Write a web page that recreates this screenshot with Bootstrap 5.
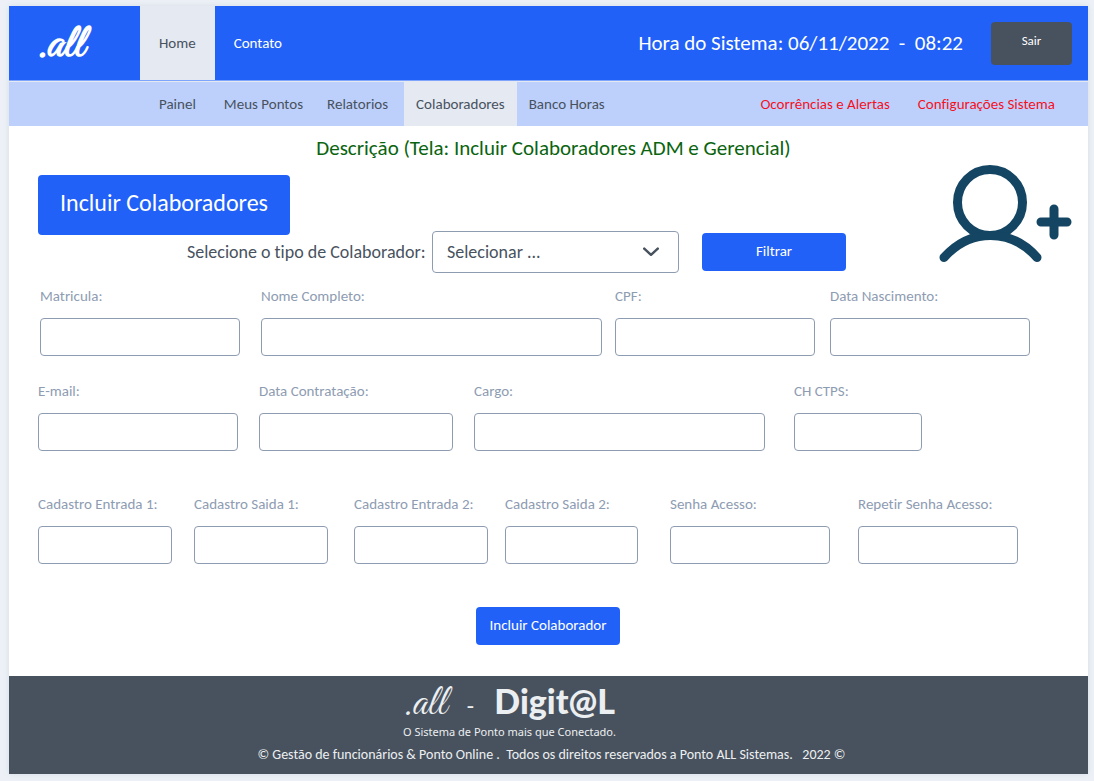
<!DOCTYPE html>
<html lang="pt-BR">
<head>
<meta charset="utf-8">
<meta name="viewport" content="width=device-width, initial-scale=1">
<title>Ponto ALL - Incluir Colaboradores</title>
<link rel="stylesheet" href="https://cdn.jsdelivr.net/npm/bootstrap@5.3.0/dist/css/bootstrap.min.css">
<style>
  :root { --azul: #2161f8; --chumbo: #48525e; --claro: #e4e9f2; --borda: #8e9cb2; }
  body { background: #edf1f7; font-family: Carlito, Lato, sans-serif; font-variant-ligatures: none; font-size: 15px; line-height: 20px; color: var(--chumbo); padding: 6px 6px 8px 9px; }
  .folha { background: #fff; box-shadow: 0 0 6px rgba(60, 80, 120, .12); }
  .topo { background: var(--azul); min-height: 75px; border-bottom: 1px solid #7ea4fb; }
  .topo a, .sub a { text-decoration: none; }
  .marca { display: flex; align-items: center; width: 131px; padding: 4px 0 0 28px; color: #fff; font: bold 48px/60px "Brush Script MT", "Great Vibes", "Dancing Script", cursive; }
  .aba-topo { display: flex; align-items: center; padding: 0 19px; color: #fff; }
  .ativa { background: var(--claro); color: var(--chumbo); }
  .relogio { font-size: 21px; line-height: 28px; color: #fff; white-space: pre; }
  .btn { --bs-btn-font-size: 15px; --bs-btn-line-height: 20px; --bs-btn-border-radius: 4px; border: 0; }
  .btn-azul, .btn-azul:hover { background: var(--azul); color: #fff; }
  .btn-sair, .btn-sair:hover { background: var(--chumbo); color: #fff; width: 81px; height: 43px; font-size: 13px; padding: 0 0 4px; }
  .sub { background: #bdd0fc; min-height: 45px; border-top: 1px solid var(--claro); padding-left: 138px; padding-right: 33px; }
  .sub a { display: flex; align-items: center; color: var(--chumbo); padding: 0 12px; }
  .sub .alerta { color: #f5101e; padding: 0; }
  .titulo { color: #0a640f; font-size: 21px; line-height: 28px; padding: 8px 0 13px; margin: 0 0 0 11px; }
  .miolo { padding: 0 30px 31px 29px; }
  .acoes { margin-right: -14px; }
  .btn-grande { width: 252px; height: 60px; font-size: 24px; line-height: 28px; padding: 0 0 4px; }
  .filtro { padding-left: 149px; margin-top: -4px; }
  .filtro label { font-size: 18px; line-height: 24px; width: 233px; white-space: nowrap; }
  .filtro .form-select { width: 247px; height: 42px; margin: 0 23px 0 12px; font-size: 18px; line-height: 24px; padding: 0 40px 0 14px; border: 1px solid var(--borda); border-radius: 4px; color: var(--chumbo);
    background-image: url("data:image/svg+xml,%3Csvg xmlns='http://www.w3.org/2000/svg' viewBox='0 0 16 16'%3E%3Cpath d='M2 5l6 5.5L14 5' fill='none' stroke='%2348525e' stroke-width='2.2' stroke-linecap='round' stroke-linejoin='round'/%3E%3C/svg%3E");
    background-size: 18px 18px; background-position: right 18px center; }
  .btn-medio { width: 144px; height: 38px; padding: 0 0 2px; }
  .icone { margin-top: -10px; }
  .linha { display: grid; }
  .linha > div:nth-child(1) { grid-column: 1; }
  .linha > div:nth-child(2) { grid-column: 3; }
  .linha > div:nth-child(3) { grid-column: 5; }
  .linha > div:nth-child(4) { grid-column: 7; }
  .linha > div:nth-child(5) { grid-column: 9; }
  .linha > div:nth-child(6) { grid-column: 11; }
  .linha-a { grid-template-columns: 200fr 21fr 341fr 13fr 200fr 15fr 200fr 28fr; margin: 13px 0 25px; padding-left: 2px; }
  .linha-b { grid-template-columns: 200fr 21fr 194fr 21fr 291fr 29fr 128fr 136fr; margin-bottom: 43px; }
  .linha-c { grid-template-columns: 134fr 22fr 134fr 26fr 134fr 17fr 133fr 32fr 160fr 28fr 160fr 40fr; margin-bottom: 43px; }
  .linha label { display: block; color: var(--borda); margin-bottom: 12px; white-space: nowrap; }
  .linha > div { min-width: 0; }
  .linha .form-control { height: 38px; border: 1px solid var(--borda); border-radius: 4px; }
  .rodape { background: var(--chumbo); color: #eceff1; padding: 5px 0 0; min-height: 98px; }
  .assinatura { width: 212px; margin-right: 79px; }
  .assinatura .letra { font: 44px/40px "Brush Script MT", "Great Vibes", "Dancing Script", cursive; }
  .assinatura .nome { font: 900 34px/40px Lato, sans-serif; }
  .assinatura .lema { font: 11px/14px "Noto Sans", sans-serif; white-space: nowrap; }
  .direitos { font-size: 14px; white-space: pre-wrap; margin: 6px 0 0 6px; }
</style>
</head>
<body>
<div class="folha">
  <header class="topo d-flex align-items-stretch">
    <a class="marca" href="#">.all</a>
    <nav class="d-flex" aria-label="Principal">
      <a class="aba-topo ativa" href="#">Home</a>
      <a class="aba-topo" href="#">Contato</a>
    </nav>
    <div class="d-flex align-items-center ms-auto me-3">
      <div class="relogio me-4">Hora do Sistema: 06/11/2022  -  08:22</div>
      <button type="button" class="btn btn-sair ms-1">Sair</button>
    </div>
  </header>
  <nav class="sub d-flex" aria-label="Painel">
    <a href="#">Painel</a>
    <a href="#" class="ms-1">Meus Pontos</a>
    <a href="#" class="me-1">Relatorios</a>
    <a href="#" class="ativa">Colaboradores</a>
    <a href="#">Banco Horas</a>
    <a href="#" class="alerta ms-auto me-4">Ocorrências e Alertas</a>
    <a href="#" class="alerta ms-1">Configurações Sistema</a>
  </nav>
  <main class="miolo">
    <h1 class="titulo text-center fw-normal">Descrição (Tela: Incluir Colaboradores ADM e Gerencial)</h1>
    <div class="acoes d-flex justify-content-between align-items-start">
      <div>
        <button type="button" class="btn btn-azul btn-grande">Incluir Colaboradores</button>
        <form class="filtro d-flex align-items-center">
          <label for="tipo">Selecione o tipo de Colaborador:</label>
          <select id="tipo" class="form-select"><option>Selecionar ...</option></select>
          <button type="button" class="btn btn-azul btn-medio">Filtrar</button>
        </form>
      </div>
      <svg class="icone" width="133" height="98" viewBox="0 0 133 98" fill="none" stroke="#144562" stroke-width="9" stroke-linecap="round" aria-hidden="true">
        <ellipse cx="51" cy="37.500" rx="32.500" ry="33"/>
        <path d="M5 92.500C31 63 72 63 98 92.500M102 57h26M115 44v26"/>
      </svg>
    </div>
    <form>
      <div class="linha linha-a">
        <div><label for="matricula">Matricula:</label><input id="matricula" class="form-control" type="text"></div>
        <div><label for="nome">Nome Completo:</label><input id="nome" class="form-control" type="text"></div>
        <div><label for="cpf">CPF:</label><input id="cpf" class="form-control" type="text"></div>
        <div><label for="nascimento">Data Nascimento:</label><input id="nascimento" class="form-control" type="text"></div>
      </div>
      <div class="linha linha-b">
        <div><label for="email">E-mail:</label><input id="email" class="form-control" type="email"></div>
        <div><label for="contratacao">Data Contratação:</label><input id="contratacao" class="form-control" type="text"></div>
        <div><label for="cargo">Cargo:</label><input id="cargo" class="form-control" type="text"></div>
        <div><label for="ctps">CH CTPS:</label><input id="ctps" class="form-control" type="text"></div>
      </div>
      <div class="linha linha-c">
        <div><label for="entrada1">Cadastro Entrada 1:</label><input id="entrada1" class="form-control" type="text"></div>
        <div><label for="saida1">Cadastro Saida 1:</label><input id="saida1" class="form-control" type="text"></div>
        <div><label for="entrada2">Cadastro Entrada 2:</label><input id="entrada2" class="form-control" type="text"></div>
        <div><label for="saida2">Cadastro Saida 2:</label><input id="saida2" class="form-control" type="text"></div>
        <div><label for="senha">Senha Acesso:</label><input id="senha" class="form-control" type="password"></div>
        <div><label for="repetir">Repetir Senha Acesso:</label><input id="repetir" class="form-control" type="password"></div>
      </div>
      <div class="text-center"><button type="button" class="btn btn-azul btn-medio">Incluir Colaborador</button></div>
    </form>
  </main>
  <footer class="rodape d-flex flex-column align-items-center">
    <div class="assinatura">
      <div class="d-flex justify-content-between align-items-baseline"><span class="letra">.all</span><span class="fs-4 lh-1">-</span><span class="nome">Digit@L</span></div>
      <div class="lema">O Sistema de Ponto mais que Conectado.</div>
    </div>
    <p class="direitos">© Gestão de funcionários &amp; Ponto Online .  Todos os direitos reservados a Ponto ALL Sistemas.   2022 ©</p>
  </footer>
</div>
<script src="https://cdn.jsdelivr.net/npm/bootstrap@5.3.0/dist/js/bootstrap.bundle.min.js"></script>
</body>
</html>
